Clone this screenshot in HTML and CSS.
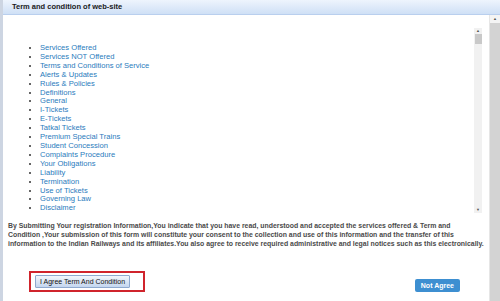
FILE: index.html
```html
<!DOCTYPE html>
<html lang="en">
  <head>
    <meta charset="UTF-8" />
    <meta name="viewport" content="width=device-width, initial-scale=1.0" />
    <title>Term and condition of web-site</title>
    <link rel="stylesheet" href="styles.css">
  </head>
  <body>
    <div class="dialog">
      <div class="dialog-title">Term and condition of web-site</div>

      <div class="dialog-body">
        <div class="dialog-content">
          <div class="terms-box">
            <ul class="terms-list">
              <li><a href="#">Services Offered</a></li>
              <li><a href="#">Services NOT Offered</a></li>
              <li><a href="#">Terms and Conditions of Service</a></li>
              <li><a href="#">Alerts &amp; Updates</a></li>
              <li><a href="#">Rules &amp; Policies</a></li>
              <li><a href="#">Definitions</a></li>
              <li><a href="#">General</a></li>
              <li><a href="#">I-Tickets</a></li>
              <li><a href="#">E-Tickets</a></li>
              <li><a href="#">Tatkal Tickets</a></li>
              <li><a href="#">Premium Special Trains</a></li>
              <li><a href="#">Student Concession</a></li>
              <li><a href="#">Complaints Procedure</a></li>
              <li><a href="#">Your Obligations</a></li>
              <li><a href="#">Liability</a></li>
              <li><a href="#">Termination</a></li>
              <li><a href="#">Use of Tickets</a></li>
              <li><a href="#">Governing Law</a></li>
              <li><a href="#">Disclaimer</a></li>
            </ul>

            <div class="scrollbar inner-scroll">
              <span class="arrow">&#9650;</span>
              <span class="thumb"></span>
              <span class="track"></span>
              <span class="arrow">&#9660;</span>
            </div>
          </div>

          <p class="consent">
            By Submitting Your registration Information,You indicate that you have read, understood and accepted the services offered &amp; Term and<br>
            Condition ,Your submission of this form will constitute your consent to the collection and use of this information and the transfer of this<br>
            information to the Indian Railways and its affiliates.You also agree to receive required administrative and legal notices such as this electronically.
          </p>

          <div class="actions">
            <div class="highlight">
              <button class="btn-agree" type="button">I Agree Term And Condition</button>
            </div>
            <button class="btn-disagree" type="button">Not Agree</button>
          </div>
        </div>

        <div class="scrollbar outer-scroll">
          <span class="arrow">&#9650;</span>
          <span class="track"></span>
        </div>
      </div>
    </div>
  </body>
</html>
```

FILE: styles.css
```css
/* Page */
body {
  margin: 0;
  background: #fff;
  font-family: "Liberation Sans", Arial, sans-serif;
}

.dialog {
  display: flex;
  flex-direction: column;
  height: 301px;
  border-left: 3px solid #cdd5e2;
  box-sizing: border-box;
}

/* Title bar */
.dialog-title {
  height: 15px;
  line-height: 14px;
  padding-left: 9px;
  font-size: 7.5px;
  font-weight: bold;
  color: #1a1a1a;
  background: linear-gradient(#eef4fd, #cfe0f6);
  border-bottom: 1px solid #b9cfee;
  box-sizing: border-box;
}

.dialog-body {
  flex: 1;
  display: flex;
}

.dialog-content {
  flex: 1;
  display: flex;
  flex-direction: column;
  padding: 0 0 0 5px;
}

/* Terms list */
.terms-box {
  display: flex;
  height: 198px;
  margin-right: 7px;
}

.terms-list {
  flex: 1;
  margin: 0;
  padding: 29px 0 0 32px;
  list-style: disc;
  font-size: 7.6px;
  line-height: 8.9px;
  color: #333;
}

.terms-list li::marker {
  font-size: 7px;
}

.terms-list a {
  color: #2a7bbd;
  text-decoration: none;
}

/* Fake scrollbars */
.scrollbar {
  display: flex;
  flex-direction: column;
  align-items: center;
}

.scrollbar .arrow {
  font-size: 4px;
  line-height: 6px;
  color: #555;
}

.scrollbar .track {
  flex: 1;
}

.inner-scroll {
  width: 8px;
  margin-top: 13px;
  background: #f1f1f1;
}

.inner-scroll .thumb {
  width: 7px;
  height: 10px;
  background: #c9c9c9;
}

.outer-scroll {
  width: 10px;
  background: #d3d3d3;
  border-left: 1px solid #e6e6e6;
}

.outer-scroll .arrow {
  width: 100%;
  text-align: center;
  background: #f4f4f4;
  padding: 1px 0;
}

/* Consent text */
.consent {
  margin: 8px 0 0 0;
  font-size: 6.9px;
  line-height: 9px;
  font-weight: bold;
  color: #4a4a4a;
  white-space: nowrap;
}

/* Buttons */
.actions {
  display: flex;
  justify-content: space-between;
  align-items: flex-start;
  margin: 23px 29px 0 21px;
}

.highlight {
  display: flex;
  border: 2px solid #d0242c;
  padding: 2px 13px 2px 4px;
}

.btn-agree {
  font-family: "Liberation Sans", Arial, sans-serif;
  font-size: 7px;
  color: #111;
  height: 13px;
  padding: 0 4px;
  border: 1px solid #8ea9cf;
  border-radius: 1px;
  background: linear-gradient(#f2f6fc, #c4d6ef);
}

.btn-disagree {
  margin-top: 8px;
  font-family: "Liberation Sans", Arial, sans-serif;
  font-size: 7px;
  font-weight: bold;
  color: #fff;
  height: 13px;
  padding: 0 6px;
  border: none;
  border-radius: 2px;
  background: #3d8fd1;
}
```
